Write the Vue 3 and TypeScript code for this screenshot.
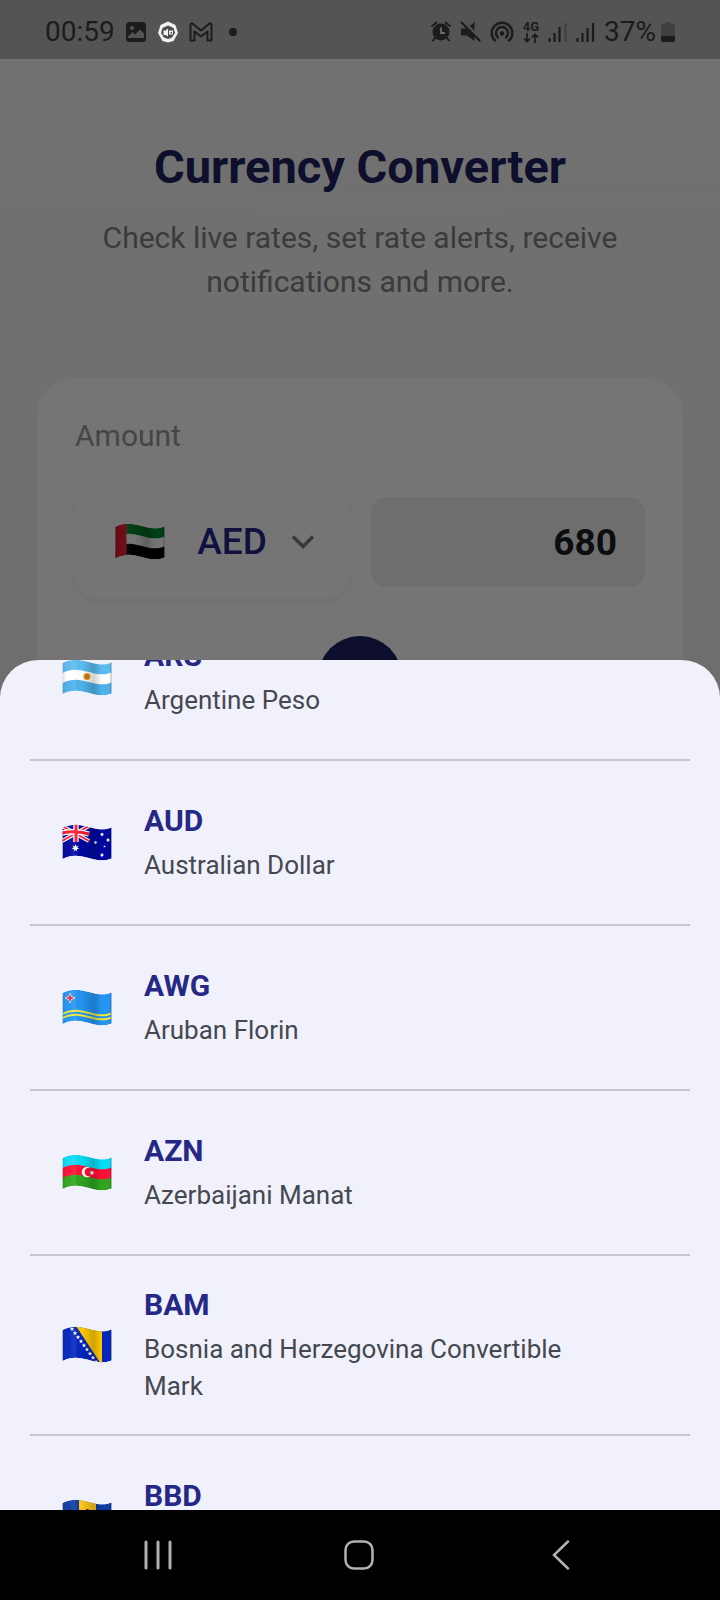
<script setup lang="ts">
import { defineComponent, h, onMounted, ref } from 'vue'

interface Shape {
  d: string
  fill?: string
  stroke?: string
  width?: number
}

interface Currency {
  code: string
  name: string
}

// Closed ribbon following the wave of the cloth between two heights.
const band = (top: number, bottom: number, fill: string): Shape => ({
  d:
    `M.5 ${top + 4}C10 ${top - 1} 18 ${top + 0.5} 27 ${top + 3}S42 ${top + 6.5} 49.5 ${top + 3.5}` +
    `V${bottom + 3.5}C42 ${bottom + 6.5} 36 ${bottom + 5.5} 27 ${bottom + 3}S10 ${bottom - 1} .5 ${bottom + 4}Z`,
  fill,
})

const star = (x: number, y: number, r: number, fill: string, points = 5): Shape => {
  const steps = Array.from({ length: points * 2 }, (_, i) => {
    const radius = i % 2 ? r * 0.45 : r
    const angle = (Math.PI * i) / points - Math.PI / 2
    return `${(x + radius * Math.cos(angle)).toFixed(2)} ${(y + radius * Math.sin(angle)).toFixed(2)}`
  })
  return { d: `M${steps.join('L')}Z`, fill }
}

const disc = (x: number, y: number, r: number, fill: string): Shape => ({
  d: `M${x - r} ${y}a${r} ${r} 0 1 0 ${2 * r} 0a${r} ${r} 0 1 0 ${-2 * r} 0Z`,
  fill,
})

const flags: Record<string, Shape[]> = {
  AED: [
    band(0, 11, '#008a30'),
    band(10, 21, '#ffffff'),
    band(20, 31, '#000000'),
    { d: 'M0 0H11.5V37H0Z', fill: '#f0142c' },
  ],
  ARS: [
    band(0, 11, '#5cbcf0'),
    band(10, 21, '#ffffff'),
    band(20, 31, '#4eb2ea'),
    disc(25, 17.5, 3.6, '#f0a830'),
    disc(25, 17.5, 2.6, '#cf7a16'),
  ],
  AUD: [
    band(0, 31, '#0008a0'),
    { d: 'M0 2L27 17M27 2L0 17', stroke: '#ffffff', width: 4 },
    { d: 'M0 2L27 17M27 2L0 17', stroke: '#fb1c34', width: 1.6 },
    { d: 'M14 0V18M0 9Q13 6 27 10', stroke: '#ffffff', width: 5.4 },
    { d: 'M14 0V18M0 9Q13 6 27 10', stroke: '#fb1c34', width: 3 },
    star(13.5, 24, 4, '#ffffff', 7),
    star(40, 10.5, 2.2, '#ffffff', 7),
    star(33.5, 18.5, 2, '#ffffff', 7),
    star(46, 16, 2.2, '#ffffff', 7),
    star(42.5, 22.5, 1.3, '#ffffff'),
    star(40, 31, 2.2, '#ffffff', 7),
  ],
  AWG: [
    band(0, 31, '#2494f2'),
    band(20, 22, '#efe83c'),
    band(24, 26, '#efe83c'),
    star(8, 9, 5.6, '#ffffff', 4),
    star(8, 9, 4.2, '#e0304c', 4),
  ],
  AZN: [
    band(0, 11, '#08dcf4'),
    band(10, 21, '#ff1034'),
    band(20, 31, '#30a41e'),
    disc(25, 18, 5.2, '#ffffff'),
    disc(26.8, 18, 4.2, '#ff1034'),
    star(30, 18.8, 2.6, '#ffffff', 8),
  ],
  BAM: [
    band(0, 31, '#0426bc'),
    { d: 'M14 0H40V38H39Z', fill: '#ffc800' },
    ...Array.from({ length: 9 }, (_, i) => star(10 + i * 3, 3 + i * 4.1, 2.3, '#ffffff')),
  ],
  BBD: [
    band(0, 31, '#0c3ca4'),
    { d: 'M17 0H34V38H17Z', fill: '#ffc41c' },
    { d: 'M25.5 10V27M20 11Q20 20 25.5 20Q31 20 31 11', stroke: '#141414', width: 2 },
  ],
}

const FlagIcon = defineComponent({
  props: { code: { type: String, required: true } },
  setup(props) {
    return () => {
      const id = `flag-${props.code}`
      const cloth = band(0, 31, '#000').d
      return h('svg', { viewBox: '0 0 50 38', 'aria-hidden': 'true' }, [
        h('defs', [
          h('clipPath', { id: `${id}-clip` }, [h('path', { d: cloth })]),
          h('linearGradient', { id: `${id}-light` }, [
            h('stop', { offset: '0', 'stop-color': '#000', 'stop-opacity': '.12' }),
            h('stop', { offset: '.12', 'stop-color': '#fff', 'stop-opacity': '.02' }),
            h('stop', { offset: '.24', 'stop-color': '#fff', 'stop-opacity': '.1' }),
            h('stop', { offset: '.38', 'stop-color': '#000', 'stop-opacity': '0' }),
            h('stop', { offset: '.64', 'stop-color': '#000', 'stop-opacity': '.18' }),
            h('stop', { offset: '.8', 'stop-color': '#000', 'stop-opacity': '0' }),
            h('stop', { offset: '.96', 'stop-color': '#000', 'stop-opacity': '0' }),
            h('stop', { offset: '1', 'stop-color': '#000', 'stop-opacity': '.3' }),
          ]),
        ]),
        h(
          'g',
          { 'clip-path': `url(#${id}-clip)` },
          (flags[props.code] ?? []).map((s) =>
            h('path', { d: s.d, fill: s.fill ?? 'none', stroke: s.stroke, 'stroke-width': s.width }),
          ),
        ),
        h('path', { d: cloth, fill: `url(#${id}-light)` }),
      ])
    }
  },
})

const currencies: Currency[] = [
  { code: 'ARS', name: 'Argentine Peso' },
  { code: 'AUD', name: 'Australian Dollar' },
  { code: 'AWG', name: 'Aruban Florin' },
  { code: 'AZN', name: 'Azerbaijani Manat' },
  { code: 'BAM', name: 'Bosnia and Herzegovina Convertible Mark' },
  { code: 'BBD', name: 'Barbadian Dollar' },
]

const amount = ref('680')
const selected = ref('AED')
const sheet = ref<HTMLElement | null>(null)

onMounted(() => {
  if (sheet.value) sheet.value.scrollTop = 64
})
</script>

<template>
  <div class="phone">
    <header class="status">
      <div class="status-group left">
        <span class="clock">00:59</span>
        <svg width="22" height="22" viewBox="0 0 22 22" aria-hidden="true">
          <rect x="1" y="1" width="20" height="20" rx="3.5" fill="#1c1c1c" />
          <circle cx="7" cy="7" r="2" fill="#545454" />
          <path d="M3 17V15.500L7.500 11L10 13.500L15 8.500L19 12.500V17Z" fill="#545454" />
        </svg>
        <svg width="22" height="22" viewBox="0 0 22 22" aria-hidden="true">
          <path d="M11 .5L18.500 4L21 12L16.500 20L11 21.500L5.500 20L1 12L3.500 4Z" fill="#f0f0f0" />
          <path d="M11 4.500L16.500 7L18 12L15 16.500L11 18L7 16.500L4 12L5.500 7Z" fill="#4c4c4c" />
          <path d="M6.500 9.500H8.500L11 7.500V15.500L8.500 14H6.500ZM12 9.500H16V13.500H12Z" fill="#f0f0f0" />
          <path d="M13.500 11H15V12.500H13.500Z" fill="#4c4c4c" />
        </svg>
        <svg width="24" height="20" viewBox="0 0 24 20" aria-hidden="true">
          <path
            d="M1.500 18.500V3Q1.500 1 3.500 1.500L12 8.500L20.500 1.500Q22.500 1 22.500 3V18.500H18.500V9.500L12 14.500L5.500 9.500V18.500Z"
            fill="none" stroke="#1c1c1c" stroke-width="2" stroke-linejoin="round"
          />
        </svg>
        <span class="dot"></span>
      </div>
      <div class="status-group right">
        <svg width="20" height="21" viewBox="0 0 20 21" aria-hidden="true">
          <path d="M1 5L5.500 1.500M19 5L14.500 1.500M4 17L2 19.500M16 17L18 19.500" stroke="#1c1c1c" stroke-width="2" stroke-linecap="round" />
          <circle cx="10" cy="11" r="8.500" fill="#1c1c1c" />
          <path d="M10 6.500V12H14" fill="none" stroke="#6a6a6a" stroke-width="1.800" />
        </svg>
        <svg width="21" height="21" viewBox="0 0 21 21" aria-hidden="true">
          <path d="M1 7.500H7L14.500 1V20L7 14.500H1Z" fill="#1c1c1c" />
          <path d="M3.500 .5L21 18" stroke="#545454" stroke-width="2.500" />
          <path d="M1.500 1.500L19.500 19.500" stroke="#1c1c1c" stroke-width="2.200" stroke-linecap="round" />
        </svg>
        <svg width="24" height="21" viewBox="0 0 24 21" aria-hidden="true">
          <g fill="none" stroke="#1c1c1c" stroke-width="2.500" stroke-linecap="round">
            <path d="M5 19.500A10.300 10.300 0 1 1 19 19.500" />
            <path d="M8 16.500A6 6 0 1 1 16 16.500" />
          </g>
          <circle cx="12" cy="12.500" r="2.200" fill="#1c1c1c" />
        </svg>
        <span class="network">
          <span>4G</span>
          <svg width="16" height="10" viewBox="0 0 16 10" aria-hidden="true">
            <path d="M4 0V8.500M1 5.500L4 8.700L7 5.500M12 10V1.500M9 4.500L12 1.300L15 4.500" fill="none" stroke="#1c1c1c" stroke-width="1.800" />
          </svg>
        </span>
        <svg width="19" height="20" viewBox="0 0 19 20" aria-hidden="true">
          <path d="M1.500 16V20M6.500 11V20M11.500 5V20" stroke="#1c1c1c" stroke-width="2.200" />
          <path d="M17.500 1V20" stroke="#404040" stroke-width="2.200" />
        </svg>
        <svg width="19" height="20" viewBox="0 0 19 20" aria-hidden="true">
          <path d="M1.500 16V20M6.500 11V20M11.500 6V20M17 1V20" stroke="#1c1c1c" stroke-width="2.200" />
        </svg>
        <span class="power">
          <span class="clock">37%</span>
          <svg width="14" height="20" viewBox="0 0 14 20" aria-hidden="true">
            <path d="M4 2V1Q4 0 5 0H9Q10 0 10 1V2H12Q14 2 14 4V14H0V4Q0 2 2 2Z" fill="#404040" />
            <path d="M0 14H14V18Q14 20 12 20H2Q0 20 0 18Z" fill="#1c1c1c" />
          </svg>
        </span>
      </div>
    </header>

    <main class="stage">
      <div class="page">
        <h1>Currency Converter</h1>
        <p class="intro">Check live rates, set rate alerts, receive notifications and more.</p>
        <section class="card">
          <label class="amount-label" for="amount">Amount</label>
          <div class="fields">
            <button class="picker" type="button" aria-haspopup="listbox" aria-label="Currency AED">
              <FlagIcon class="flag" :code="selected" />
              <span class="picked">{{ selected }}</span>
              <svg width="24" height="24" viewBox="0 0 24 24" aria-hidden="true">
                <path d="M2 6.500L12 16.500L22 6.500" fill="none" stroke="#7c7c7c" stroke-width="3.500" />
              </svg>
            </button>
            <input id="amount" v-model="amount" class="amount" type="text" inputmode="decimal" />
          </div>
          <button class="swap" type="button" aria-label="Swap currencies"></button>
        </section>
      </div>

      <div class="overlay">
        <ul ref="sheet" class="sheet">
          <li v-for="c in currencies" :key="c.code">
            <button class="row" type="button" @click="selected = c.code">
              <FlagIcon class="flag" :code="c.code" />
              <span class="labels">
                <span class="code">{{ c.code }}</span>
                <span class="name">{{ c.name }}</span>
              </span>
            </button>
          </li>
        </ul>
      </div>
    </main>

    <nav class="nav">
      <button type="button" aria-label="Recent apps">
        <svg width="30" height="30" viewBox="0 0 30 30" aria-hidden="true">
          <path d="M3 2V28M15 2V28M27 2V28" stroke="#b2b2b2" stroke-width="3" stroke-linecap="round" />
        </svg>
      </button>
      <button type="button" aria-label="Home">
        <svg width="30" height="30" viewBox="0 0 30 30" aria-hidden="true">
          <rect x="1.500" y="1.500" width="27" height="27" rx="8.500" fill="none" stroke="#b2b2b2" stroke-width="2.500" />
        </svg>
      </button>
      <button type="button" aria-label="Back">
        <svg width="30" height="30" viewBox="0 0 30 30" aria-hidden="true">
          <path d="M23 1.500L9 15L23 28.500" fill="none" stroke="#b2b2b2" stroke-width="2.500" stroke-linecap="round" />
        </svg>
      </button>
    </nav>
  </div>
</template>

<style>
body {
  margin: 0;
}
</style>

<style scoped>
.phone {
  display: flex;
  flex-direction: column;
  height: 100vh;
  font-family: Roboto, 'Liberation Sans', sans-serif;
  background: #000;
}
.phone * {
  box-sizing: border-box;
}
button,
input {
  border: 0;
  padding: 0;
  font-family: inherit;
  color: inherit;
}
svg {
  display: block;
  flex: none;
}

.status {
  display: flex;
  justify-content: space-between;
  align-items: center;
  height: 59px;
  flex: none;
  padding: 4px 45px 0;
  background: #545454;
  color: #1c1c1c;
}
.status-group,
.power {
  display: flex;
  align-items: center;
}
.left {
  gap: 10px;
}
.right {
  gap: 9px;
}
.power {
  gap: 5px;
}
.clock {
  font-size: 28px;
  line-height: 32px;
  font-weight: 400;
}
.dot {
  width: 8px;
  height: 8px;
  margin-left: 6px;
  border-radius: 50%;
  background: #1c1c1c;
}
.network {
  display: flex;
  flex-direction: column;
  align-items: center;
  font-size: 13px;
  line-height: 12px;
  font-weight: 700;
}

.stage {
  display: grid;
  flex: 1;
  min-height: 0;
  overflow: hidden;
  position: relative;
  background: linear-gradient(#f7f7f7, #f0f0f0 40%);
}
.page {
  padding: 78px 37px 0;
  min-height: 0;
}
h1 {
  margin: 0 0 19px;
  font-size: 47px;
  line-height: 60px;
  font-weight: 700;
  text-align: center;
  color: #1f2261;
}
.intro {
  margin: 0 auto 74px;
  max-width: 560px;
  font-size: 30px;
  line-height: 44px;
  text-align: center;
  color: #808080;
}
.card {
  display: flex;
  flex-direction: column;
  height: 700px;
  padding: 38px;
  border-radius: 38px;
  background: #fff;
}
.amount-label {
  margin-bottom: 29px;
  font-size: 30px;
  line-height: 40px;
  color: #989898;
}
.fields {
  display: grid;
  grid-template-columns: 1fr 1fr;
  align-items: center;
  gap: 22px;
}
.picker {
  display: flex;
  align-items: center;
  justify-content: center;
  height: 114px;
  padding-left: 6px;
  border-radius: 24px;
  background: #fff;
  box-shadow: 0 4px 8px rgba(0, 0, 0, 0.05);
}
.flag {
  width: 50px;
  height: 38px;
}
.picked {
  margin: 0 24px 0 32px;
  font-size: 37px;
  line-height: 44px;
  font-weight: 500;
  color: #26278d;
}
.amount {
  width: 100%;
  height: 90px;
  padding: 0 28px;
  border-radius: 15px;
  background: #efefef;
  font-size: 37px;
  font-weight: 700;
  text-align: right;
  color: #1c1e1f;
}
.swap {
  align-self: center;
  width: 84px;
  height: 84px;
  flex: none;
  margin-top: 37px;
  border-radius: 50%;
  background: #1f2261;
}

.overlay {
  position: absolute;
  inset: 0;
  display: grid;
  grid-template-rows: 41.45% minmax(0, 1fr);
  background: rgba(0, 0, 0, 0.54);
}
.sheet {
  grid-row: 2;
  margin: 0;
  padding: 0 30px;
  list-style: none;
  overflow-y: auto;
  scrollbar-width: none;
  border-radius: 38px 38px 0 0;
  background: #f1f1fb;
}
.sheet li {
  border-bottom: 2px solid #c6c6d0;
}
.row {
  display: flex;
  align-items: center;
  gap: 32px;
  width: 100%;
  min-height: 163px;
  padding: 29px 76px 29px 32px;
  background: none;
  text-align: left;
}
.labels {
  display: flex;
  flex-direction: column;
  gap: 6px;
}
.code {
  font-size: 30px;
  line-height: 40px;
  font-weight: 700;
  color: #262886;
}
.name {
  font-size: 26px;
  line-height: 37px;
  color: #454850;
}

.nav {
  display: grid;
  grid-template-columns: repeat(3, 1fr);
  height: 90px;
  flex: none;
  padding: 0 59px 0 57px;
  background: #000;
}
.nav button {
  display: flex;
  align-items: center;
  justify-content: center;
  background: none;
}
</style>
